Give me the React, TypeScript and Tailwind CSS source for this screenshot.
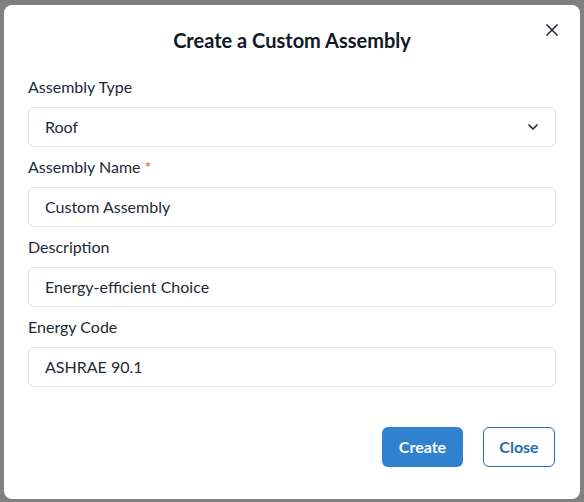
import { X, ChevronDown } from "lucide-react";

const fields = [
  { label: "Assembly Name", value: "Custom Assembly", required: true },
  { label: "Description", value: "Energy-efficient Choice" },
  { label: "Energy Code", value: "ASHRAE 90.1" },
];

export default function App() {
  return (
    <div
      className="flex h-[502px] w-[584px] items-start bg-[#808080] pl-[4px] pt-[5px]"
      style={{ fontFamily: "Lato, 'Open Sans', sans-serif" }}
    >
      <div className="flex h-[494px] w-[576px] flex-col rounded-lg bg-white px-6 pt-[21px] text-[#1f2937]">
        <div className="relative flex items-center justify-center">
          <h2 className="text-[20px] font-bold leading-[28px] text-[#111827]">
            Create a Custom Assembly
          </h2>
          <button className="absolute right-[-6px] top-[-6px] text-[#1f2937]">
            <X size={20} strokeWidth={2} />
          </button>
        </div>

        <div className="mt-[21px] flex flex-col gap-2">
          <label className="text-[16px] leading-[24px]">Assembly Type</label>
          <div className="flex h-[40px] items-center justify-between rounded-md border border-[#dfe6ee] pl-4 pr-[14px] text-[16px]">
            <span>Roof</span>
            <ChevronDown size={16} strokeWidth={2.5} />
          </div>
          {fields.map((f) => (
            <div key={f.label} className="flex flex-col gap-2">
              <label className="text-[16px] leading-[24px]">
                {f.label}
                {f.required && <span className="ml-1 text-[#e5534b]">*</span>}
              </label>
              <div className="flex h-[40px] items-center rounded-md border border-[#dfe6ee] px-4 text-[16px]">
                {f.value}
              </div>
            </div>
          ))}
        </div>

        <div className="mt-[40px] flex justify-end gap-5 pr-px">
          <button className="h-[40px] w-[81px] rounded-md bg-[#3182ce] text-[16px] font-bold text-white">
            Create
          </button>
          <button className="h-[40px] w-[72px] rounded-md border border-[#2b6cb0] text-[16px] font-bold text-[#2b6cb0]">
            Close
          </button>
        </div>
      </div>
    </div>
  );
}
